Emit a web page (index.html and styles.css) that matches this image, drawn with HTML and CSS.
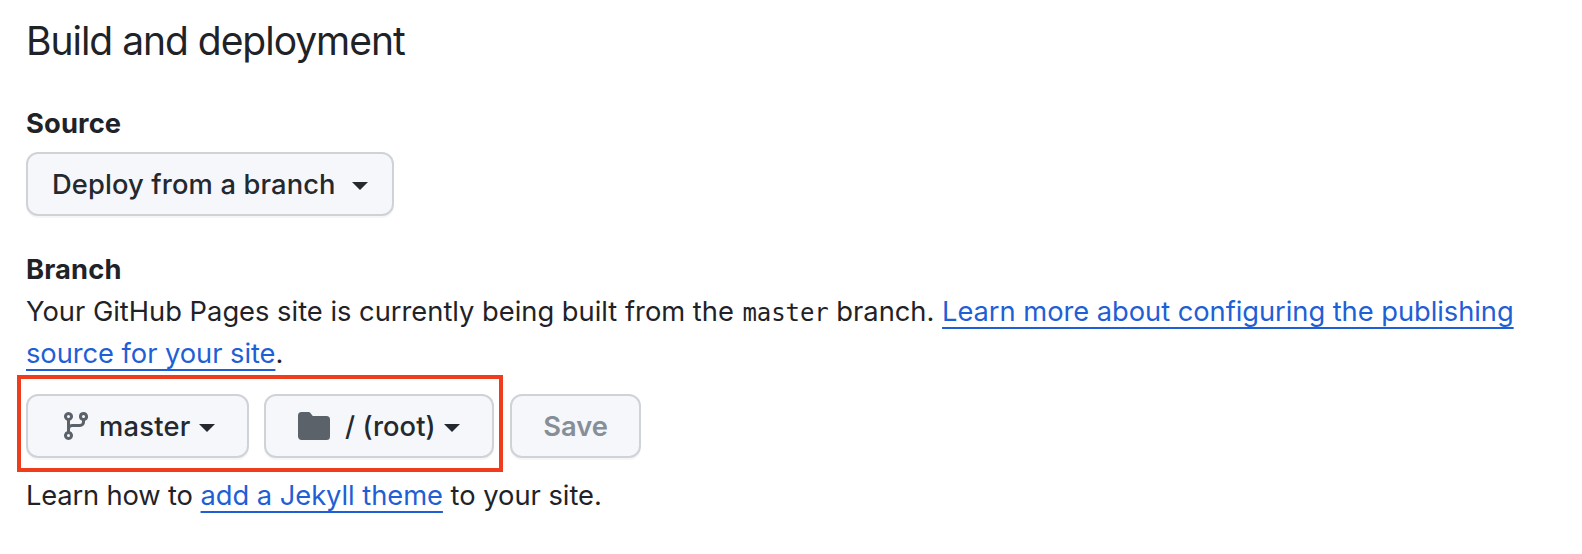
FILE: index.html
```html
<!DOCTYPE html>
<html lang="en">
<head>
<meta charset="utf-8">
<title>Build and deployment</title>
<link rel="stylesheet" href="styles.css">
</head>
<body>
<main class="settings">
  <h2 class="title">Build and deployment</h2>
  <h4 class="label source-label">Source</h4>
  <button class="btn btn-source"><span class="source-text">Deploy from a branch</span><span class="caret"></span></button>
  <h4 class="label branch-label">Branch</h4>
  <p class="text"><span class="built">Your GitHub Pages site is currently being built from the</span> <code class="code">master</code> <span class="word">branch.</span> <a class="link more" href="#">Learn more about configuring the publishing</a><br><a class="link more-end" href="#">source for your site</a>.</p>
  <div class="controls">
    <div class="highlighted">
      <button class="btn btn-branch">
        <svg class="icon-branch" viewBox="0 0 16 16" width="32" height="32"><path fill-rule="evenodd" d="M11.75 2.5a.75.75 0 100 1.5.75.75 0 000-1.5zm-2.25.75a2.25 2.25 0 113 2.122V6A2.5 2.5 0 0110 8.5H6a1 1 0 00-1 1v1.128a2.251 2.251 0 11-1.5 0V5.372a2.25 2.25 0 111.5 0v1.836A2.492 2.492 0 016 7h4a1 1 0 001-1v-.628A2.25 2.25 0 019.5 3.25zM4.25 12a.75.75 0 100 1.5.75.75 0 000-1.5zM3.5 3.25a.75.75 0 111.5 0 .75.75 0 01-1.5 0z"/></svg>
        <span class="branch-text">master</span><span class="caret"></span>
      </button>
      <button class="btn btn-folder">
        <svg class="icon-folder" viewBox="0 0 16 16" width="36" height="32"><path d="M1.75 1A1.75 1.75 0 000 2.75v10.5C0 14.216.784 15 1.75 15h12.5A1.75 1.75 0 0016 13.25v-8.5A1.75 1.75 0 0014.25 3H7.5a.25.25 0 01-.2-.1l-.9-1.2C6.07 1.26 5.55 1 5 1H1.75z"/></svg>
        <span class="folder-text">/ (root)</span><span class="caret"></span>
      </button>
    </div>
    <button class="btn btn-save" disabled><span class="save-text">Save</span></button>
  </div>
  <p class="text theme"><span class="learn">Learn how to</span> <a class="link jekyll" href="#">add a Jekyll theme</a> <span class="tail">to your site.</span></p>
</main>
</body>
</html>
```
FILE: styles.css
```css
* { box-sizing: border-box; }
body {
  margin: 0;
  background: #fff;
  color: #1f2328;
  font: 400 27.3px/42px Inter, "Liberation Sans", sans-serif;
}
.settings { padding: 11px 26px 0; white-space: nowrap; }
.title { margin: 0 0 32px; font-size: 39px; line-height: 60px; font-weight: 400; letter-spacing: -1.03px; }
.label { margin: 0; font-size: 27.3px; line-height: 42px; font-weight: 650; letter-spacing: 0.15px; }
.source-label { margin-bottom: 7px; }
.branch-label { margin-top: 33px; }
.text { margin: 0; }
.learn { letter-spacing: -0.14px; }
.jekyll { letter-spacing: -0.04px; }
.tail { letter-spacing: -0.02px; }
.code { margin: 0 0 0 1px; font: 400 24px/1 "DejaVu Sans Mono", monospace; letter-spacing: -0.1px; }
.link { color: #1f5fd6; text-decoration: underline; text-decoration-thickness: 2px; text-underline-offset: 6px; text-decoration-skip-ink: none; }
.more { letter-spacing: -0.04px; }
.more-end { letter-spacing: -0.05px; }
.btn {
  display: flex;
  align-items: center;
  height: 64px;
  padding: 0;
  border: 2px solid #cfd3d7;
  border-radius: 12px;
  background: #f6f7fb;
  box-shadow: 0 2px 0 rgba(31, 35, 40, 0.04);
  color: #24292f;
  font: 550 27.3px/42px Inter, "Liberation Sans", sans-serif;
}
.btn span { margin-top: 2px; }
.btn svg { flex: none; fill: #5b626a; }
.btn .caret { flex: none; margin-top: 3px; border: 8px solid transparent; border-top-color: currentColor; border-bottom: 0; }
.btn-source { width: 368px; padding-left: 24px; justify-content: space-between; padding-right: 24px; }
.source-text { letter-spacing: 0.13px; }
.controls { display: flex; margin: 0 0 3px -9px; gap: 7px; }
.highlighted { display: flex; gap: 15px; width: 486px; height: 97px; padding: 15px 5px; border: 4px solid #ed3d1d; }
.btn-branch { width: 223px; padding-left: 32px; }
.branch-text { width: 92px; margin: 0 8px 0 7px; text-align: left; letter-spacing: 0.25px; }
.btn-folder { width: 230px; padding-left: 30px; }
.folder-text { width: 91px; margin: 0 8px 0 13px; text-align: left; letter-spacing: 0.1px; }
.btn-save { width: 131px; margin-top: 19px; justify-content: center; color: #868e97; font-weight: 600; }
```
